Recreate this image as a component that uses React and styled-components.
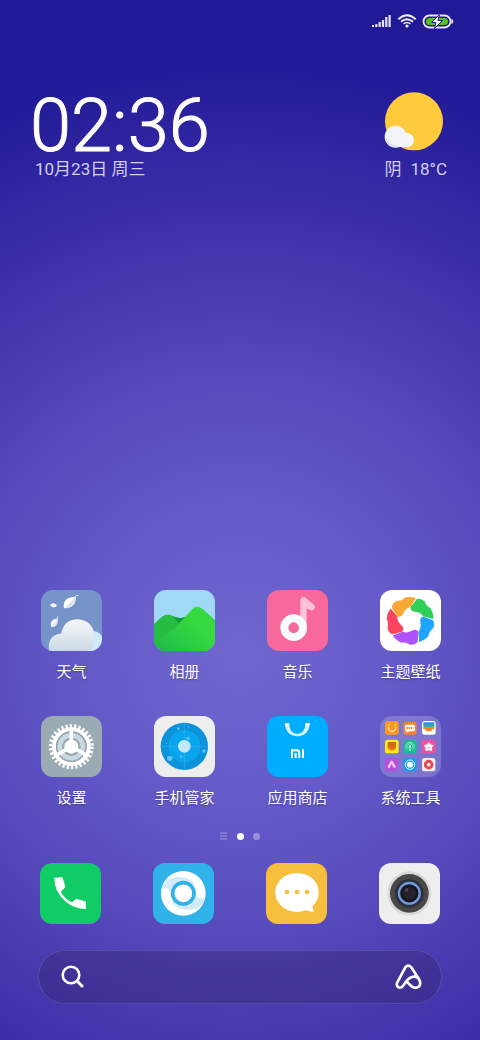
import React from "react";
import styled, { createGlobalStyle } from "styled-components";

const apps = [
  { name: "天气", Icon: WeatherIcon },
  { name: "相册", Icon: GalleryIcon },
  { name: "音乐", Icon: MusicIcon },
  { name: "主题壁纸", Icon: ThemesIcon },
  { name: "设置", Icon: SettingsIcon },
  { name: "手机管家", Icon: SecurityIcon },
  { name: "应用商店", Icon: StoreIcon },
  { name: "系统工具", Icon: FolderIcon },
];

const dockApps = [
  { name: "电话", Icon: PhoneIcon },
  { name: "浏览器", Icon: BrowserIcon },
  { name: "短信", Icon: MessageIcon },
  { name: "相机", Icon: CameraIcon },
];

export default function App() {
  return (
    <Screen>
      <GlobalStyle />
      <StatusBar>
        <SignalIcon />
        <WifiIcon />
        <BatteryIcon />
      </StatusBar>
      <Header>
        <ClockWidget>
          <Time>02:36</Time>
          <WidgetText>10月23日 周三</WidgetText>
        </ClockWidget>
        <WeatherWidget>
          <SunIcon />
          <WidgetText>
            <span>阴</span>
            <span>18°C</span>
          </WidgetText>
        </WeatherWidget>
      </Header>
      <AppGrid>
        {apps.map(({ name, Icon }) => (
          <AppButton key={name} type="button">
            <Icon />
            <AppName>{name}</AppName>
          </AppButton>
        ))}
      </AppGrid>
      <Pager>
        <PagerMenu viewBox="0 0 8 8">
          <path d="M0 1h7M0 4h7M0 7h7" stroke="#fff" strokeWidth="1" />
        </PagerMenu>
        <PagerDot $active />
        <PagerDot />
      </Pager>
      <Dock>
        {dockApps.map(({ name, Icon }) => (
          <AppButton key={name} type="button" aria-label={name}>
            <Icon />
          </AppButton>
        ))}
      </Dock>
      <SearchBar onSubmit={(e) => e.preventDefault()}>
        <SearchButton type="submit" aria-label="搜索">
          <svg width="24" height="24" viewBox="0 0 24 24" fill="none" stroke="#fff">
            <circle cx="10" cy="10" r="8.300" strokeWidth="2.600" />
            <path d="M16.300 16.300L21 21" strokeWidth="3" strokeLinecap="round" />
          </svg>
        </SearchButton>
        <SearchInput type="text" aria-label="搜索" />
        <SearchButton type="button" aria-label="小爱同学">
          <svg width="28" height="28" viewBox="0 0 84 84" fill="none" stroke="#fff">
            <path
              d="M37 55L26 70Q19 77 12 72Q6 67 10 58L34 13Q42 3 52 13L75 49Q83 63 74 71Q65 78 54 71L37 55Q47 42 60 41Q69 40 75 49"
              strokeWidth="8"
              strokeLinecap="round"
              strokeLinejoin="round"
            />
          </svg>
        </SearchButton>
      </SearchBar>
    </Screen>
  );
}

function SignalIcon() {
  return (
    <svg width="20" height="14" viewBox="0 0 20 14" fill="#e6e4f8">
      <rect x="0" y="11" width="2" height="2" />
      <rect x="3.300" y="10" width="2.200" height="3" />
      <rect x="6.600" y="8" width="2.200" height="5" />
      <rect x="9.900" y="6" width="2.200" height="7" />
      <rect x="13.200" y="3" width="2.200" height="10" />
      <rect x="16.500" y="1" width="2.200" height="12" />
    </svg>
  );
}

function WifiIcon() {
  return (
    <svg width="20" height="14" viewBox="0 0 20 14" fill="none" stroke="#f0effc">
      <path d="M1.300 5.200Q10-2.800 18.700 5.200" strokeWidth="2" />
      <path d="M4 7.800Q10 2.600 16 7.800" strokeWidth="1.800" />
      <path d="M6.500 10Q10 7 13.500 10" strokeWidth="1.600" />
      <circle cx="10" cy="12" r="1.600" fill="#f0effc" stroke="none" />
    </svg>
  );
}

function BatteryIcon() {
  return (
    <svg width="32" height="15" viewBox="0 0 32 15">
      <rect x="1.500" y="1.500" width="27" height="12" rx="6" fill="none" stroke="#eae8fb" strokeWidth="1.800" />
      <rect x="4" y="4" width="22" height="7" rx="3.500" fill="#52c41a" />
      <path d="M30 5.500q1.500 2 0 4z" fill="#eae8fb" stroke="#eae8fb" />
      <path d="M17.500 0.500L9.500 8.500H14L12.500 14.500L20.500 6.500H16Z" fill="#fff" stroke="#211a94" strokeWidth="1" />
    </svg>
  );
}

function SunIcon() {
  return (
    <svg width="60" height="60" viewBox="0 0 180 180">
      <circle cx="93" cy="88" r="87" fill="#ffca3b" />
      <circle cx="38" cy="134" r="33" fill="#f3f4fa" />
      <circle cx="72" cy="144" r="21" fill="#f7f7f3" />
      <path d="M6 138Q10 165 38 165H74Q84 164 88 157L60 120Z" fill="#f3f3f6" />
      <path d="M6 138Q10 165 38 165H50Q20 158 6 138Z" fill="#dcdffb" />
    </svg>
  );
}

function WeatherIcon() {
  return (
    <AppIcon viewBox="0 0 183 183" $color="#7694ca">
      <defs>
        <linearGradient id="cloud" x1="0" y1="0" x2="0" y2="1">
          <stop offset="0" stopColor="#f6f8fa" />
          <stop offset="1" stopColor="#ccd9e4" />
        </linearGradient>
      </defs>
      <circle cx="155" cy="155" r="32" fill="#cfeafc" />
      <path
        d="M24 183Q18 140 54 131H60Q70 88 110 88Q152 90 160 132Q163 165 142 183Z"
        fill="url(#cloud)"
      />
      <path d="M68 52Q66 20 104 20Q106 52 72 55Z" fill="#fff" />
      <path d="M103 21Q106 52 72 55Z" fill="#dbe3ec" />
      <path d="M100 23Q105 15 113 16" fill="none" stroke="#e9eff7" strokeWidth="3" />
      <path d="M27 46Q36 34 48 46Q40 59 27 46Z" fill="#f1f5f9" />
      <path d="M30 107Q26 87 49 86Q54 108 32 112Z" fill="#fff" />
      <path d="M49 86Q54 108 32 112Z" fill="#dbe3ec" />
      <path d="M48 88L50 80" stroke="#e9eff7" strokeWidth="3" />
    </AppIcon>
  );
}

function GalleryIcon() {
  return (
    <AppIcon viewBox="0 0 183 183" $color="#a0d9f6">
      <defs>
        <linearGradient id="hill" x1="0" y1="1" x2="0.700" y2="0.400">
          <stop offset="0" stopColor="#1cb94a" />
          <stop offset="1" stopColor="#36d93f" />
        </linearGradient>
      </defs>
      <path d="M0 102L24 81Q39 69 57 79Q76 88 92 80L130 120L60 183H0Z" fill="#1fb545" />
      <path d="M57 79Q76 88 94 81L70 105Z" fill="#119c3c" />
      <path d="M0 102L24 81Q39 69 57 79L75 101L0 170Z" fill="#27bd43" />
      <path d="M0 163L70 107L112 60Q129 42 147 58L183 91V183H0Z" fill="url(#hill)" />
    </AppIcon>
  );
}

function MusicIcon() {
  return (
    <AppIcon viewBox="0 0 183 183" $color="#f7689b">
      <path
        d="M100 110V31Q101 21 110 21Q116 21 120 27L141 44Q147 51 141 58Q135 64 127 59L119 55V110Z"
        fill="#fbc3d8"
      />
      <circle cx="80" cy="113" r="28" fill="none" stroke="#f5fbff" strokeWidth="24" />
    </AppIcon>
  );
}

function ThemesIcon() {
  const colors = ["#30cf57", "#1da5ff", "#b052fa", "#fb4560", "#f8a833"];
  return (
    <AppIcon viewBox="0 0 183 183" $color="#fff">
      {colors.map((color, i) => (
        <path
          key={color}
          fill={color}
          transform={`translate(91 92) rotate(${i * 72})`}
          d="M20 -65L0 -41Q0 -28 14 -27Q30 -26 39 -13L69 -5Q70 -24 60 -38Q48 -43 43 -58Q32 -68 20 -65Z"
        />
      ))}
    </AppIcon>
  );
}

function SettingsIcon() {
  return (
    <AppIcon viewBox="0 0 183 183" $color="#9aabb3">
      <circle cx="91" cy="92" r="62" fill="none" stroke="#fff" strokeWidth="11" strokeDasharray="7 5.986" />
      <circle cx="91" cy="92" r="52" fill="none" stroke="#fff" strokeWidth="12" />
      <circle cx="91" cy="92" r="46" fill="#8d9fa8" />
      <circle cx="91" cy="92" r="34" fill="none" stroke="#cad9e1" strokeWidth="13" />
      <circle cx="91" cy="92" r="41" fill="none" stroke="#cad9e1" strokeWidth="4" strokeDasharray="4 3.156" />
      <circle cx="91" cy="92" r="27" fill="#9aabb3" />
      <path d="M91 92V44M91 92L49 116M91 92L133 116" stroke="#fff" strokeWidth="11" />
      <circle cx="91" cy="92" r="21" fill="#fff" />
    </AppIcon>
  );
}

function SecurityIcon() {
  return (
    <AppIcon viewBox="0 0 183 183" $color="#eeeeef">
      <circle cx="91" cy="91" r="71" fill="#0a92db" />
      <circle cx="91" cy="91" r="47" fill="#06a5ee" stroke="#38b5ee" strokeWidth="1" />
      <path d="M91 20V162M20 91H162" stroke="#48baed" strokeWidth="1.500" />
      <circle cx="91" cy="91" r="19" fill="#c0eafb" />
      <g fill="#62c3ee">
        <circle cx="47" cy="127" r="8" />
        <circle cx="150" cy="105" r="5" />
        <circle cx="102" cy="67" r="5" />
        <circle cx="73" cy="38" r="4" />
        <circle cx="81" cy="122" r="4" />
        <circle cx="38" cy="81" r="2" />
        <circle cx="103" cy="33" r="2" />
      </g>
    </AppIcon>
  );
}

function StoreIcon() {
  return (
    <AppIcon viewBox="0 0 183 183" $color="#00aeff">
      <path d="M54 21H66Q68 53 91 54Q114 53 116 21H128Q126 60 91 61Q56 60 54 21Z" fill="#d4f1ff" />
      <path d="M54 21H66L67 31H55ZM116 21H128L127 31H115Z" fill="#fff" />
      <g fill="none" stroke="#fff" strokeWidth="6">
        <path d="M75 126V103H89Q97 103 97 111V126" />
        <path d="M86 111V126" />
        <path d="M108 100V126" />
      </g>
    </AppIcon>
  );
}

function FolderIcon() {
  return (
    <AppIcon viewBox="0 0 183 183" $color="rgba(255, 255, 255, 0.2)">
      <g transform="translate(15 15)">
        <rect width="41" height="41" rx="8" fill="#f99a1c" />
        <path d="M10 17Q11 31 21 31Q31 31 33 17" fill="none" stroke="#fff" strokeWidth="3" />
        <circle cx="12" cy="11" r="2" fill="#fff" />
        <circle cx="31" cy="11" r="2" fill="#fff" />
      </g>
      <g transform="translate(70 18)">
        <rect width="40" height="38" rx="8" fill="#f58332" />
        <path d="M10 8H31Q35 8 35 13V23Q35 28 30 28H18L10 33V28Q5 28 5 22V13Q5 8 10 8Z" fill="#fff" />
        <path d="M10 18H30" stroke="#f58332" strokeWidth="6" strokeDasharray="4 2" />
      </g>
      <g transform="translate(126 15)">
        <rect width="41" height="41" rx="8" fill="#fff" />
        <path d="M4 4H37V12H4Z" fill="#2d91ec" />
        <path d="M4 11H37V19H4Z" fill="#27ba83" />
        <path d="M4 18H37V25Q29 24 28 31H13Q12 24 4 25Z" fill="#f98428" />
      </g>
      <g transform="translate(15 71)">
        <rect width="41" height="41" rx="8" fill="#ffec13" />
        <path d="M8 7H33V28L21 34L8 28Z" fill="#d66b13" />
        <path d="M8 23L21 29L33 23V29L21 35L8 29Z" fill="#f89922" />
      </g>
      <g transform="translate(70 72)">
        <rect width="40" height="40" rx="8" fill="#19bd91" />
        <g fill="none" stroke="#b5f4df" strokeWidth="2">
          <path d="M12 30A13 13 0 1 1 28 30" />
          <path d="M15 25A8 8 0 1 1 25 25" />
        </g>
        <circle cx="20" cy="19" r="3" fill="#d9fff2" />
        <path d="M20 20V33" stroke="#b5f4df" strokeWidth="4" />
      </g>
      <g transform="translate(126 72)">
        <rect width="40" height="40" rx="8" fill="#f94d9c" />
        <path
          d="M20 9L24 15L32 17L27 23L28 31L20 28L12 31L13 23L8 17L16 15Z"
          fill="#fff"
          stroke="#fff"
          strokeWidth="4"
          strokeLinejoin="round"
        />
        <path d="M15 22Q20 28 25 22" fill="none" stroke="#f94d9c" strokeWidth="2" />
      </g>
      <g transform="translate(15 126)">
        <rect width="40" height="40" rx="8" fill="#b550dc" />
        <path d="M10 29L20 11L30 29" fill="none" stroke="#f3c5fb" strokeWidth="7" strokeLinejoin="round" />
      </g>
      <g transform="translate(70 126)">
        <rect width="40" height="40" rx="8" fill="#199ee8" />
        <circle cx="20" cy="20" r="14" fill="none" stroke="#d7f1fc" strokeWidth="3" />
        <circle cx="20" cy="20" r="9" fill="#fff" />
        <path d="M20 29A9 9 0 0 0 29 20" fill="none" stroke="#91d1ee" strokeWidth="3" />
      </g>
      <g transform="translate(126 126)">
        <rect width="40" height="40" rx="8" fill="#f2eff3" />
        <circle cx="20" cy="20" r="10" fill="none" stroke="#eb4a4d" strokeWidth="9" />
      </g>
    </AppIcon>
  );
}

function PhoneIcon() {
  return (
    <AppIcon viewBox="0 0 183 183" $color="#10cc66">
      <path
        d="M43 44L67 43Q73 57 76 73L62 86Q74 108 96 118L109 107Q123 110 138 116V138Q104 139 75 114Q42 84 43 44Z"
        fill="#fff"
      />
    </AppIcon>
  );
}

function BrowserIcon() {
  return (
    <AppIcon viewBox="0 0 183 183" $color="#31b2e8">
      <circle cx="91" cy="91" r="67" fill="#fff" />
      <path d="M26 78Q34 42 76 41Q112 42 126 66L91 91L54 96Q50 74 38 76Q30 76 26 78Z" fill="#d3ebf8" />
      <path d="M156 104Q148 140 106 141Q70 140 56 116L91 91L128 86Q132 108 144 106Q152 106 156 104Z" fill="#d3ebf8" />
      <circle cx="91" cy="91" r="32" fill="#fff" stroke="#31b2e8" strokeWidth="11" />
    </AppIcon>
  );
}

function MessageIcon() {
  return (
    <AppIcon viewBox="0 0 183 183" $color="#f5be3c">
      <path
        d="M93 30C130 30 158 55 158 88C158 106 150 120 140 129Q139 140 144 146Q132 147 119 142Q108 147 93 147C57 147 28 121 28 88C28 55 57 30 93 30Z"
        fill="#fff"
      />
      <g fill="#f5be3c">
        <circle cx="63" cy="87" r="7" />
        <circle cx="93" cy="87" r="7" />
        <circle cx="123" cy="87" r="7" />
      </g>
    </AppIcon>
  );
}

function CameraIcon() {
  return (
    <AppIcon viewBox="0 0 183 183" $color="#eeeeee">
      <circle cx="91" cy="91" r="66" fill="#dadada" />
      <circle cx="91" cy="91" r="58" fill="#4a4747" />
      <circle cx="91" cy="91" r="43" fill="#2c313d" />
      <circle cx="91" cy="91" r="31" fill="#17161d" stroke="#719be0" strokeWidth="7" />
      <circle cx="91" cy="91" r="20" fill="#242128" />
      <circle cx="83" cy="81" r="5" fill="#4b4853" />
    </AppIcon>
  );
}

const GlobalStyle = createGlobalStyle`
  body {
    margin: 0;
  }

  * {
    box-sizing: border-box;
  }
`;

const Screen = styled.main`
  display: flex;
  flex-direction: column;
  min-height: 100vh;
  padding-bottom: 36px;
  background: radial-gradient(
    125% 58% at 50% 63%,
    #7068d0 0%,
    #645ac8 25%,
    #574bbd 45%,
    #4639b0 63%,
    #3529a4 81%,
    #211996 100%
  );
  font-family: Roboto, "Noto Sans CJK SC", sans-serif;
  color: #fff;
`;

const StatusBar = styled.div`
  display: flex;
  align-items: center;
  justify-content: flex-end;
  gap: 5px;
  height: 42px;
  padding-right: 26px;
`;

const Header = styled.header`
  display: flex;
  justify-content: space-between;
  padding: 50px 33px 0 30px;
  margin-bottom: auto;
`;

const ClockWidget = styled.div`
  display: flex;
  flex-direction: column;
`;

const Time = styled.time`
  height: 66px;
  font-size: 74px;
  font-weight: 300;
  line-height: 68px;
  -webkit-text-stroke: 1px #fff;
`;

const WidgetText = styled.div`
  display: flex;
  gap: 9px;
  padding-left: 5px;
  font-size: 17px;
  line-height: 22px;
  color: #d3d0f0;
`;

const WeatherWidget = styled.div`
  display: flex;
  flex-direction: column;
  align-items: center;
  gap: 6px;
`;

const AppGrid = styled.section`
  display: grid;
  grid-template-columns: repeat(4, 1fr);
  row-gap: 34px;
  padding: 0 13px 0 15px;
`;

const AppButton = styled.button`
  display: flex;
  flex-direction: column;
  align-items: center;
  gap: 11px;
  padding: 0;
  border: none;
  background: none;
  color: #fff;
  font-family: inherit;
  cursor: pointer;
`;

const AppIcon = styled.svg`
  width: 61px;
  height: 61px;
  border-radius: 12px;
  background: ${(props) => props.$color};
`;

const AppName = styled.span`
  font-size: 15px;
  line-height: 20px;
  text-shadow: 0 1px 2px rgba(0, 0, 0, 0.3);
`;

const Pager = styled.div`
  display: flex;
  align-items: center;
  justify-content: center;
  gap: 9px;
  padding: 22px 0 21px;
  height: 55px;
`;

const PagerMenu = styled.svg`
  width: 8px;
  height: 8px;
  opacity: 0.4;
`;

const PagerDot = styled.span`
  width: 7px;
  height: 7px;
  border-radius: 50%;
  background: ${(props) => (props.$active ? "#fff" : "rgba(255, 255, 255, 0.35)")};
`;

const Dock = styled.nav`
  display: grid;
  grid-template-columns: repeat(4, 1fr);
  padding: 0 14px;
`;

const SearchBar = styled.form`
  display: flex;
  align-items: center;
  height: 54px;
  margin: 26px 38px 0;
  padding: 0 19px 0 22px;
  border: 1px solid rgba(255, 255, 255, 0.12);
  border-radius: 27px;
  background: rgba(50, 40, 120, 0.45);
`;

const SearchButton = styled.button`
  display: flex;
  padding: 0;
  border: none;
  background: none;
  cursor: pointer;
`;

const SearchInput = styled.input`
  flex: 1;
  min-width: 0;
  height: 100%;
  padding: 0 12px;
  border: none;
  outline: none;
  background: none;
  color: #fff;
  font-family: inherit;
  font-size: 15px;
`;
